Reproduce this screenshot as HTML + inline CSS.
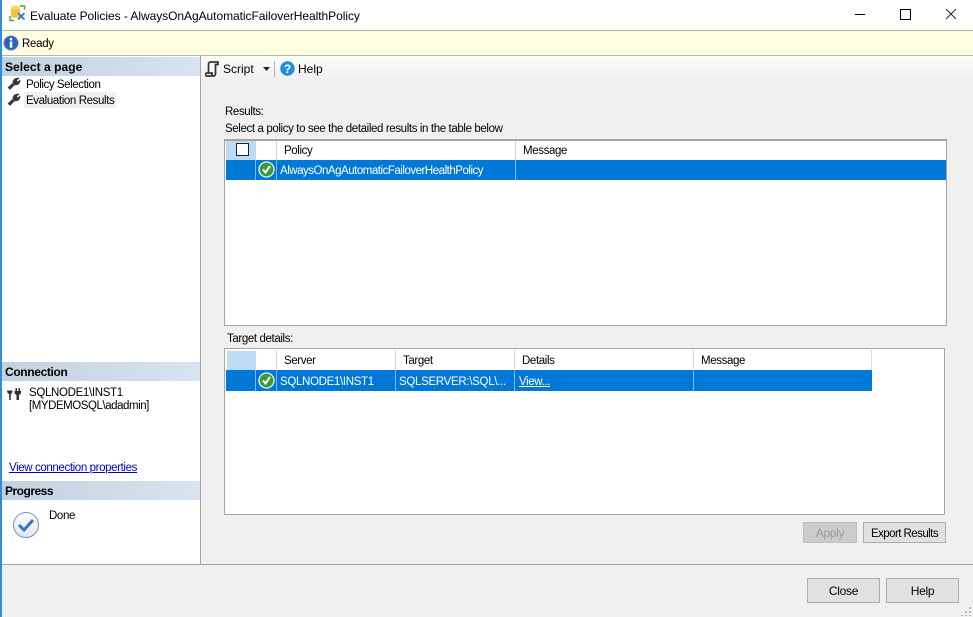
<!DOCTYPE html>
<html><head><meta charset="utf-8"><style>
html,body{margin:0;padding:0}
body{width:973px;height:617px;position:relative;overflow:hidden;background:#f0f0f0;font:11.5px/14px "Liberation Sans",sans-serif;color:#000}
.a,.t{position:absolute}
.t{white-space:nowrap;letter-spacing:-.38px;margin-top:1px}
.hd{position:absolute;left:2px;width:198px;height:19px;background:linear-gradient(90deg,#c2d1e0,#d7e4f1)}
.hd b{position:absolute;left:3px;top:3px;font-size:12px}
.w{color:#fff}
.v{position:absolute;width:1px;background:#d9d9d9}
.vs{position:absolute;width:1px;background:#8fb5d9}
.btn{position:absolute;box-sizing:border-box;border:1px solid #adadad;background:#e1e1e1;text-align:center;font-size:12px;letter-spacing:-.3px}
</style></head><body>
<div class="a" style="left:0;top:0;width:2px;height:617px;background:#2b8fe0"></div>
<div class="a" style="left:2px;top:0;width:971px;height:30px;background:#fff"></div>
<svg class="a" style="left:9px;top:5px" width="17" height="17" viewBox="0 0 17 17"><path d="M1 11v4.500h4M11 1h4.500v3.500" stroke="#3aa655" stroke-width="1.400" fill="none"/><ellipse cx="6.500" cy="2.500" rx="4.500" ry="2" fill="#f7d774"/><path d="M2 3v8c0 2.500 9 2.500 9 0V3c0 1.500-9 1.500-9 0z" fill="#f5c63c"/><path d="M9 8l6.500 6.500M15.500 8L9 14.500" stroke="#2b7cc4" stroke-width="1.900"/></svg>
<div class="t" style="left:30px;top:9px;margin-top:0;font-size:12px;letter-spacing:-.05px">Evaluate Policies - AlwaysOnAgAutomaticFailoverHealthPolicy</div>
<div class="a" style="left:855px;top:14px;width:10px;height:1px;background:#000"></div>
<div class="a" style="left:900px;top:9px;width:9px;height:9px;border:1px solid #000"></div>
<svg class="a" style="left:945px;top:8px" width="12" height="12"><path d="M1 1l10 10M11 1L1 11" stroke="#222" stroke-width="1"/></svg>

<div class="a" style="left:2px;top:30px;width:971px;height:24px;background:#ffffe1;border-top:1px solid #b5b5b5;border-bottom:1px solid #b5b5b5"></div>
<svg class="a" style="left:3px;top:35px" width="16" height="16"><circle cx="8" cy="8" r="7.300" fill="#2c5fc0" stroke="#9aa8c4"/><circle cx="8" cy="4.200" r="1.300" fill="#fff"/><rect x="6.800" y="6.500" width="2.500" height="6.200" fill="#fff"/></svg>
<div class="t" style="left:22px;top:36px;letter-spacing:-.3px">Ready</div>

<div class="a" style="left:2px;top:56px;width:198px;height:508px;background:#fff"></div>
<div class="a" style="left:200px;top:56px;width:1px;height:508px;background:#a5a5a5"></div>
<div class="hd" style="top:57px"><b style="letter-spacing:.05px">Select a page</b></div>
<svg class="a" style="left:7px;top:77px" width="14" height="13" viewBox="0 0 14 13"><path d="M1 10.500L6 6C5.500 3 8 .5 12 1L9.500 3.500l1.500 1.500L13 3c.5 3.500-2.500 5.500-5.500 4.800L3 12.500z" fill="#3a3a3a" stroke="#3a3a3a" stroke-width=".6"/></svg>
<div class="t" style="left:26px;top:77px;letter-spacing:-.42px">Policy Selection</div>
<div class="a" style="left:24px;top:92px;width:92px;height:16px;background:#f0f0f0"></div>
<svg class="a" style="left:7px;top:93px" width="14" height="13" viewBox="0 0 14 13"><path d="M1 10.500L6 6C5.500 3 8 .5 12 1L9.500 3.500l1.500 1.500L13 3c.5 3.500-2.500 5.500-5.500 4.800L3 12.500z" fill="#3a3a3a" stroke="#3a3a3a" stroke-width=".6"/></svg>
<div class="t" style="left:26px;top:93px">Evaluation Results</div>

<div class="hd" style="top:362px"><b style="letter-spacing:-.35px">Connection</b></div>
<svg class="a" style="left:7px;top:387px" width="14" height="14" viewBox="0 0 14 14"><path d="M0 3.500h5.500c0 2-.6 3-1.700 3.500V13H2.200V7C1 6.500 0 5.500 0 3.500zM7.500 4h6.500v2.500L12 8v5H9.500V8L7.500 6.500z" fill="#333"/><path d="M8.500 1h1.500v3H8.500zM11.500 1H13v3h-1.500z" fill="#333"/></svg>
<div class="t" style="left:29px;top:385px;letter-spacing:-.33px">SQLNODE1\INST1</div>
<div class="t" style="left:29px;top:398px;letter-spacing:-.45px">[MYDEMOSQL\adadmin]</div>
<div class="t" style="left:9px;top:460px;color:#00c;text-decoration:underline">View connection properties</div>
<div class="hd" style="top:481px"><b style="letter-spacing:-.5px">Progress</b></div>
<svg class="a" style="left:13px;top:511px" width="26" height="28"><defs><linearGradient id="g" x1="0" y1="0" x2="0" y2="1"><stop offset="0" stop-color="#fff"/><stop offset="1" stop-color="#dfe5ef"/></linearGradient></defs><circle cx="13" cy="14" r="12.500" fill="url(#g)" stroke="#7f93b8"/><path d="M6 14l5 5 9-10" fill="none" stroke="#3a6fd0" stroke-width="3"/></svg>
<div class="t" style="left:49px;top:508px">Done</div>

<div class="a" style="left:201px;top:56px;width:772px;height:24px;background:linear-gradient(#fcfcfc,#f0f0f0)"></div>
<svg class="a" style="left:205px;top:61px" width="14" height="16" viewBox="0 0 14 16"><path d="M3.500 12V3c0-1 1-2 2-2H13v2.500h-2.500V13c0 1-.7 2-2 2H1.500c-1 0-1-3 0-3H7v3" fill="none" stroke="#333" stroke-width="1.700"/></svg>
<div class="t" style="left:223px;top:62px;margin-top:0;font-size:12px;letter-spacing:0">Script</div>
<svg class="a" style="left:263px;top:67px" width="7" height="4"><path d="M0 0h7L3.500 4z" fill="#222"/></svg>
<div class="a" style="left:274px;top:61px;width:1px;height:16px;background:#b5b5b5"></div>
<svg class="a" style="left:280px;top:61px" width="15" height="15"><circle cx="7.500" cy="7.500" r="7.200" fill="#1c8fd6"/><text x="7.500" y="12" font-family="Liberation Sans" font-size="12" font-weight="bold" fill="#fff" text-anchor="middle">?</text></svg>
<div class="t" style="left:298px;top:62px;margin-top:0;font-size:12px;letter-spacing:0">Help</div>

<div class="t" style="left:225px;top:104px">Results:</div>
<div class="t" style="left:225px;top:121px">Select a policy to see the detailed results in the table below</div>

<div class="a" style="left:224px;top:139px;width:721px;height:184px;background:#fff;border:2px solid #a5a5a5;border-width:2px 1px 1px 1px"></div>
<div class="a" style="left:226px;top:141px;width:30px;height:19px;background:#bcdcf3"></div>
<div class="a" style="left:236px;top:143px;width:11px;height:11px;border:1px solid #222;background:#fff"></div>
<div class="v" style="left:276px;top:141px;height:19px"></div>
<div class="v" style="left:515px;top:141px;height:19px"></div>
<div class="t" style="left:284px;top:143px">Policy</div>
<div class="t" style="left:523px;top:143px">Message</div>
<div class="a" style="left:226px;top:160px;width:720px;height:20px;background:#0078d7"></div>
<div class="vs" style="left:255px;top:160px;height:20px"></div>
<div class="vs" style="left:276px;top:160px;height:20px"></div>
<div class="vs" style="left:515px;top:160px;height:20px"></div>
<svg class="a" style="left:258px;top:161px" width="17" height="17"><circle cx="8.500" cy="8.500" r="7.500" fill="#3a9a3a" stroke="#e8f2e8" stroke-width="1.300"/><path d="M5 8.500l2.500 3L12 5" fill="none" stroke="#fff" stroke-width="2"/></svg>
<div class="t w" style="left:280px;top:163px;letter-spacing:-.48px">AlwaysOnAgAutomaticFailoverHealthPolicy</div>

<div class="t" style="left:227px;top:331px">Target details:</div>
<div class="a" style="left:224px;top:348px;width:719px;height:165px;background:#fff;border:1px solid #a5a5a5"></div>
<div class="a" style="left:227px;top:351px;width:29px;height:19px;background:#bcdcf3"></div>
<div class="v" style="left:276px;top:350px;height:20px"></div>
<div class="v" style="left:395px;top:350px;height:20px"></div>
<div class="v" style="left:514px;top:350px;height:20px"></div>
<div class="v" style="left:693px;top:350px;height:20px"></div>
<div class="v" style="left:871px;top:350px;height:20px"></div>
<div class="t" style="left:284px;top:353px">Server</div>
<div class="t" style="left:403px;top:353px">Target</div>
<div class="t" style="left:522px;top:353px">Details</div>
<div class="t" style="left:701px;top:353px">Message</div>
<div class="a" style="left:226px;top:370px;width:646px;height:21px;background:#0078d7"></div>
<div class="vs" style="left:255px;top:370px;height:21px"></div>
<div class="vs" style="left:276px;top:370px;height:21px"></div>
<div class="vs" style="left:395px;top:370px;height:21px"></div>
<div class="vs" style="left:514px;top:370px;height:21px"></div>
<div class="vs" style="left:693px;top:370px;height:21px"></div>
<svg class="a" style="left:258px;top:372px" width="17" height="17"><circle cx="8.500" cy="8.500" r="7.500" fill="#3a9a3a" stroke="#e8f2e8" stroke-width="1.300"/><path d="M5 8.500l2.500 3L12 5" fill="none" stroke="#fff" stroke-width="2"/></svg>
<div class="t w" style="left:280px;top:374px;letter-spacing:-.33px">SQLNODE1\INST1</div>
<div class="t w" style="left:399px;top:374px;letter-spacing:-.3px">SQLSERVER:\SQL\...</div>
<div class="t w" style="left:519px;top:374px;text-decoration:underline">View...</div>

<div class="btn" style="left:803px;top:522px;width:54px;height:21px;background:#ccc;border-color:#bfbfbf;color:#999;line-height:20px">Apply</div>
<div class="btn" style="left:863px;top:522px;width:83px;height:21px;line-height:22px;font-size:11.5px;letter-spacing:-.55px">Export Results</div>
<div class="a" style="left:2px;top:564px;width:971px;height:1px;background:#a5a5a5"></div>
<div class="btn" style="left:807px;top:578px;width:73px;height:25px;line-height:24px">Close</div>
<div class="btn" style="left:886px;top:578px;width:73px;height:25px;line-height:24px">Help</div>
<svg class="a" style="left:961px;top:605px" width="11" height="11"><path d="M8 2h2v2H8zM4 6h2v2H4zM8 6h2v2H8zM0 10h2v1H0zM4 10h2v1H4zM8 10h2v1H8z" fill="#b8b8b8"/></svg>
</body></html>
